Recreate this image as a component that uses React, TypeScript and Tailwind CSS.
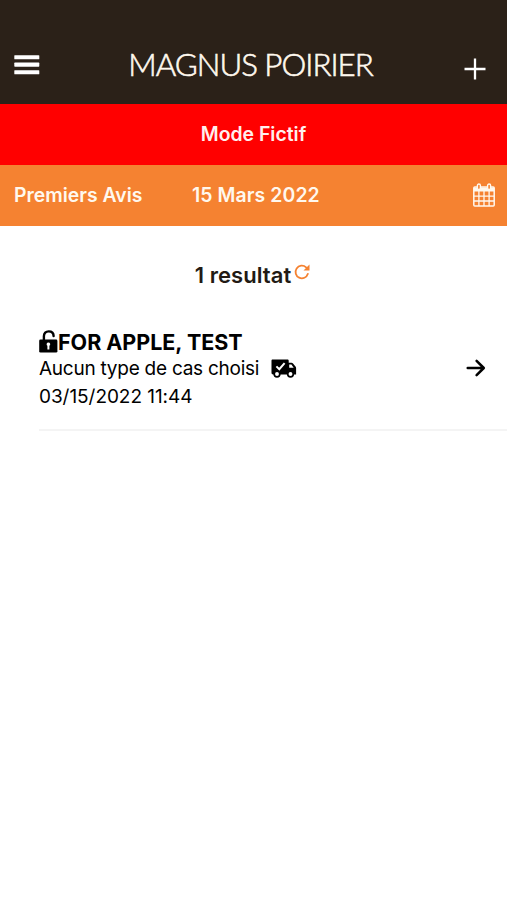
import type { ReactNode } from "react";

function MenuIcon() {
  return (
    <svg className="h-5 w-[26px]" viewBox="0 0 26 20" fill="currentColor">
      <rect x="0.3" y="0.2" width="25" height="4.1" rx="0.6" />
      <rect x="0.3" y="7.6" width="25" height="4.1" rx="0.6" />
      <rect x="0.3" y="15.2" width="25" height="4.1" rx="0.6" />
    </svg>
  );
}

function PlusIcon() {
  return (
    <svg className="h-[22px] w-[22px]" viewBox="0 0 22 22" stroke="currentColor" strokeWidth="2.3">
      <path d="M11 0.5v21M0.5 11h21" />
    </svg>
  );
}

function CalendarIcon() {
  return (
    <svg className="h-6 w-[22px]" viewBox="0 0 22 24" fill="none" stroke="currentColor">
      <path d="M1 4.5h20v4H1z" fill="currentColor" stroke="none" />
      <rect x="0.8" y="4" width="20.4" height="18.9" rx="1" strokeWidth="1.5" />
      <path d="M5.9 8v15M11 8v15M16.1 8v15M1 13.2h20M1 18h20" strokeWidth="1.3" />
      <rect x="4.4" y="1" width="3" height="5.6" rx="1.5" fill="#f58231" strokeWidth="1.4" />
      <rect x="14.6" y="1" width="3" height="5.6" rx="1.5" fill="#f58231" strokeWidth="1.4" />
    </svg>
  );
}

function RefreshIcon() {
  return (
    <svg className="h-4 w-4" viewBox="0 0 16 16" fill="none" stroke="currentColor">
      <path d="M13.9 9.8A6.3 6.3 0 1 1 12.1 3.3L13.4 4.5" strokeWidth="1.8" strokeLinecap="round" />
      <path d="M15.5 0.6v6H9.5z" fill="currentColor" stroke="none" />
    </svg>
  );
}

function UnlockIcon() {
  return (
    <svg className="h-[23px] w-[19px]" viewBox="0 0 19 23" fill="none">
      <path d="M4.9 11V6.3C4.9 3.2 6.8 1.4 9.7 1.4s4.9 1.8 4.9 4.7" stroke="currentColor" strokeWidth="2.4" strokeLinecap="round" />
      <rect x="0.2" y="9.6" width="18.2" height="12.9" rx="1.3" fill="currentColor" />
      <path d="M9.4 12.5a1.8 1.8 0 0 1 1 3.3v3.7h-2v-3.7a1.8 1.8 0 0 1 1-3.3z" fill="white" />
    </svg>
  );
}

function TruckIcon() {
  return (
    <svg className="h-[19px] w-[26px]" viewBox="0 0 26 19" fill="currentColor">
      <path d="M1.6 0.5h14.8c.8 0 1.3.5 1.3 1.3v2h2.8c.6 0 1.1.2 1.5.6l2.5 3.1c.4.5.6 1 .6 1.6v6.3h-23c-.9 0-1.6-.7-1.6-1.6V1.8C.5 1 .9.5 1.6.5z" />
      <path d="M18.2 5.5h2.2l2.3 3.3h-4.5z" fill="white" />
      <path d="M5.4 7.4l2.9 2.8 5.3-6" stroke="white" strokeWidth="2" fill="none" />
      <circle cx="6" cy="15" r="2.8" fill="white" stroke="currentColor" strokeWidth="1.7" />
      <circle cx="19.5" cy="15" r="2.8" fill="white" stroke="currentColor" strokeWidth="1.7" />
    </svg>
  );
}

function ArrowIcon() {
  return (
    <svg className="h-[18px] w-5" viewBox="0 0 20 18" fill="none" stroke="currentColor" strokeWidth="2.5" strokeLinecap="round" strokeLinejoin="round">
      <path d="M1.7 9h16M10.6 1.8L17.8 9l-7.2 7.2" />
    </svg>
  );
}

function IconButton({ label, children }: { label: string; children: ReactNode }) {
  return (
    <button aria-label={label} className="block shrink-0">
      {children}
    </button>
  );
}

export default function App() {
  return (
    <div className="min-h-screen w-full bg-white font-['Inter',sans-serif] text-black">
      <header className="flex h-[104px] items-start justify-between bg-[#2b2118] pl-3.5 pr-[21px] text-white">
        <div className="pt-[55px]">
          <IconButton label="Menu">
            <MenuIcon />
          </IconButton>
        </div>
        <h1 className="-ml-[3px] whitespace-nowrap pt-[46px] font-['Lato',sans-serif] text-[31.3px] font-light leading-9 tracking-[-1px] text-[#fff8ee] [-webkit-text-stroke:0.6px_#fff8ee]">
          MAGNUS POIRIER
        </h1>
        <div className="pt-[58px]">
          <IconButton label="Ajouter">
            <PlusIcon />
          </IconButton>
        </div>
      </header>

      <div className="flex h-[61px] items-center justify-center bg-[#ff0000] text-[19.4px] font-semibold text-[#fff0ee]">
        Mode Fictif
      </div>

      <div className="flex h-[61px] items-center bg-[#f58231] pb-px pl-3.5 pr-3 text-[19.4px] font-semibold text-[#fff8ee]">
        <span className="w-[178px] pt-0.5">Premiers Avis</span>
        <span className="flex-1 pt-0.5 tracking-[0.1px]">15 Mars 2022</span>
        <IconButton label="Calendrier">
          <CalendarIcon />
        </IconButton>
      </div>

      <main>
        <div className="flex h-[100px] items-start justify-center pr-0.5 pt-[34px] text-[#221a14]">
          <h2 className="text-[22px] font-semibold leading-[30px] tracking-[0.05px]">1 resultat</h2>
          <div className="ml-[3px] pt-1 text-[#f58231]">
            <IconButton label="Actualiser">
              <RefreshIcon />
            </IconButton>
          </div>
        </div>

        <article className="ml-[39px] flex h-[105px] items-start justify-between border-b-2 border-[#f4f4f4] pr-[21px]">
          <div className="pt-[3px]">
            <div className="flex h-[25px] items-center">
              <UnlockIcon />
              <h3 className="whitespace-nowrap text-[21.5px] font-bold leading-6 tracking-[-0.02px]">FOR APPLE, TEST</h3>
            </div>
            <div className="flex h-7 items-center gap-3 pt-px text-[19px]">
              <span className="pt-px tracking-[-0.25px]">Aucun type de cas choisi</span>
              <TruckIcon />
            </div>
            <div className="flex h-7 items-center pt-[3px] text-[19px] tracking-[-0.05px]">03/15/2022 11:44</div>
          </div>
          <div className="pt-[33px]">
            <IconButton label="Ouvrir">
              <ArrowIcon />
            </IconButton>
          </div>
        </article>
      </main>
    </div>
  );
}
